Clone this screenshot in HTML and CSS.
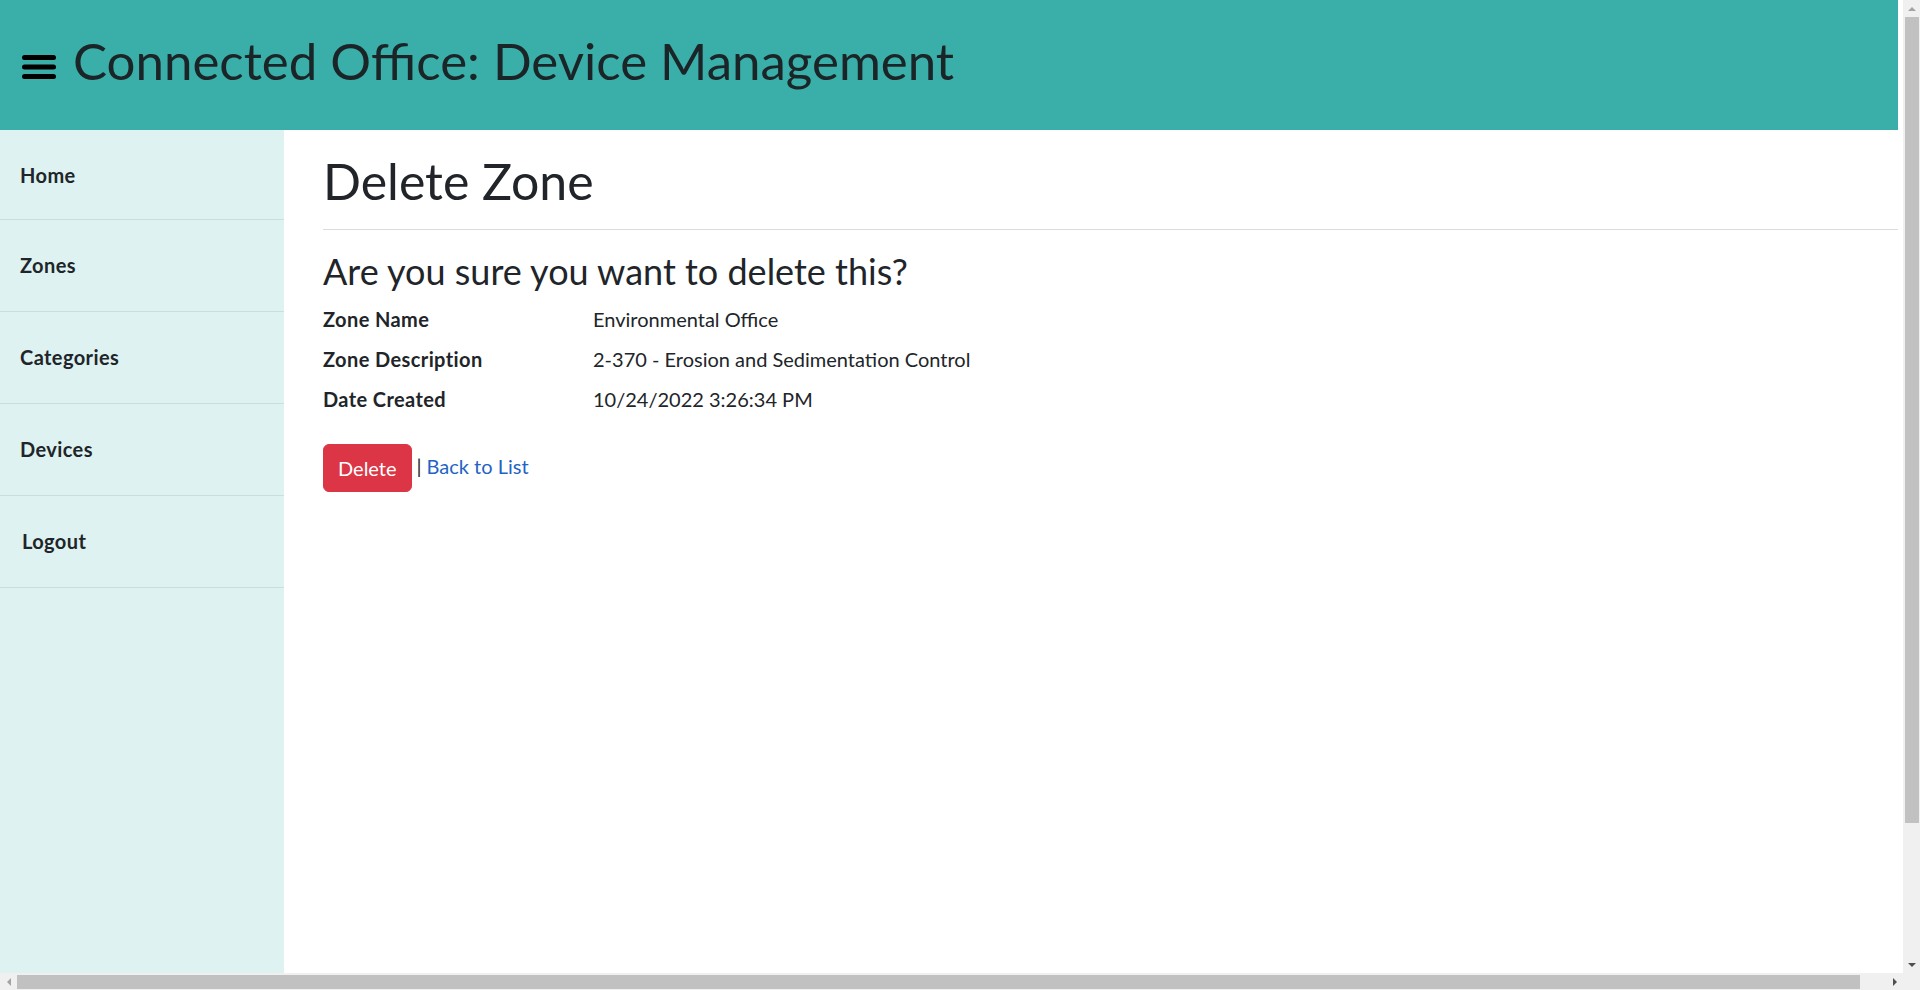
FILE: index.html
```html
<!DOCTYPE html>
<html lang="en">
<head>
<meta charset="utf-8">
<title>Delete Zone - Connected Office</title>
<link rel="stylesheet" href="styles.css">
</head>
<body>
<div class="viewport">
  <div class="page">
    <header class="topbar">
      <svg class="burger" width="34" height="24" viewBox="0 0 34 24" aria-hidden="true">
        <rect x="0" y="0" width="34" height="5" rx="2.5"/>
        <rect x="0" y="9.5" width="34" height="5" rx="2.5"/>
        <rect x="0" y="19" width="34" height="5" rx="2.5"/>
      </svg>
      <h1 class="brand">Connected Office: Device Management</h1>
    </header>
    <div class="layout">
      <nav class="sidebar">
        <a class="nav-item nav-first" href="#">Home</a>
        <a class="nav-item" href="#">Zones</a>
        <a class="nav-item" href="#">Categories</a>
        <a class="nav-item" href="#">Devices</a>
        <a class="nav-item nav-logout" href="#">Logout</a>
      </nav>
      <main class="content">
        <h1 class="title">Delete Zone</h1>
        <hr class="rule">
        <h3 class="question">Are you sure you want to delete this?</h3>
        <dl class="details">
          <dt>Zone Name</dt>
          <dd>Environmental Office</dd>
          <dt>Zone Description</dt>
          <dd>2-370 - Erosion and Sedimentation Control</dd>
          <dt>Date Created</dt>
          <dd>10/24/2022 3:26:34 PM</dd>
        </dl>
        <form class="actions">
          <button type="button" class="btn-delete">Delete</button>
          <span class="sep">|</span>
          <a class="back" href="#">Back to List</a>
        </form>
      </main>
    </div>
  </div>
  <div class="vscroll">
    <div class="arrow arrow-up"></div>
    <div class="vtrack"><div class="vthumb"></div></div>
    <div class="arrow arrow-down"></div>
  </div>
  <div class="hscroll">
    <div class="arrow arrow-left"></div>
    <div class="htrack"><div class="hthumb"></div></div>
    <div class="arrow arrow-right"></div>
  </div>
  <div class="corner"></div>
</div>
</body>
</html>
```

FILE: styles.css
```css
html {
  font-size: 20px;
}

body {
  margin: 0;
  font-family: "Lato", "Noto Sans", sans-serif;
  color: #212529;
  line-height: 1.5;
  background: #ffffff;
  overflow: hidden;
}

.viewport {
  display: grid;
  grid-template-columns: 1fr 17px;
  grid-template-rows: 1fr 17px;
  width: 1920px;
  height: 990px;
  overflow: hidden;
}

.page {
  display: flex;
  flex-direction: column;
  min-height: 0;
  overflow: hidden;
  margin-right: 5px;
}

/* Header */
.topbar {
  flex: 0 0 130px;
  display: flex;
  align-items: center;
  gap: 17px;
  padding-left: 22px;
  background: #3aafa9;
  color: #17252a;
}

.burger {
  flex: none;
  fill: #000000;
  margin-top: 4px;
}

.brand {
  margin: -8px 0 0;
  font-size: 51px;
  font-weight: 400;
  line-height: 1.2;
  color: #1b2528;
}

/* Layout */
.layout {
  flex: 1;
  display: flex;
  min-height: 0;
}

.sidebar {
  flex: 0 0 284px;
  display: flex;
  flex-direction: column;
  background: #def2f1;
}

.nav-item {
  display: block;
  padding: 30px 20px 31px;
  border-bottom: 1px solid #c9dedd;
  color: #212529;
  font-weight: 700;
  font-size: 20px;
  line-height: 30px;
  letter-spacing: 0.4px;
  text-decoration: none;
}

.nav-first {
  padding-bottom: 29px;
}

.nav-logout {
  padding-left: 22px;
}

.content {
  flex: 1;
  padding: 21px 0 0 39px;
  min-width: 0;
}

.title {
  margin: 0 0 18px;
  font-size: 50px;
  font-weight: 400;
  line-height: 60px;
}

.rule {
  margin: 0 0 20px;
  border: 0;
  border-top: 1px solid #dcdcdc;
}

.question {
  margin: 0 0 11px;
  font-size: 36px;
  font-weight: 400;
  line-height: 43px;
}

.details {
  display: grid;
  grid-template-columns: 270px 1fr;
  margin: 0 0 20px;
}

.details dt {
  font-weight: 700;
  letter-spacing: 0.4px;
  margin-bottom: 10px;
}

.details dd {
  margin: 0 0 10px;
}

.actions {
  display: flex;
  align-items: center;
  gap: 5px;
}

.btn-delete {
  font-family: inherit;
  font-size: 20px;
  line-height: 30px;
  padding: 8px 14px;
  color: #ffffff;
  background: #dc3545;
  border: 1px solid #dc3545;
  border-radius: 6px;
}

.sep {
  color: #212529;
  margin-top: -4px;
}

.back {
  color: #1f64c4;
  text-decoration: none;
  margin-top: -4px;
}

/* Fake scrollbars */
.vscroll {
  display: flex;
  flex-direction: column;
  background: #f0f0f0;
}

.vtrack {
  flex: 1;
  display: flex;
  flex-direction: column;
}

.vthumb {
  margin: 0 1px 0 2px;
  height: 806px;
  background: #c1c1c1;
}

.hscroll {
  display: flex;
  background: #f0f0f0;
}

.htrack {
  flex: 1;
  display: flex;
  align-items: center;
}

.hthumb {
  width: 1843px;
  height: 14px;
  background: #c1c1c1;
}

.corner {
  background: #f0f0f0;
}

.arrow {
  flex: 0 0 17px;
  width: 17px;
  height: 17px;
  display: flex;
  align-items: center;
  justify-content: center;
}

.arrow::before {
  content: "";
  width: 0;
  height: 0;
  border: 4px solid transparent;
}

.arrow-up::before {
  border-bottom: 4px solid #a3a3a3;
  margin-top: -4px;
}

.arrow-down::before {
  border-top: 4px solid #505050;
  margin-top: 4px;
}

.arrow-left::before {
  border-right: 4px solid #a3a3a3;
  margin-left: -4px;
}

.arrow-right::before {
  border-left: 4px solid #505050;
  margin-left: 4px;
}
```
